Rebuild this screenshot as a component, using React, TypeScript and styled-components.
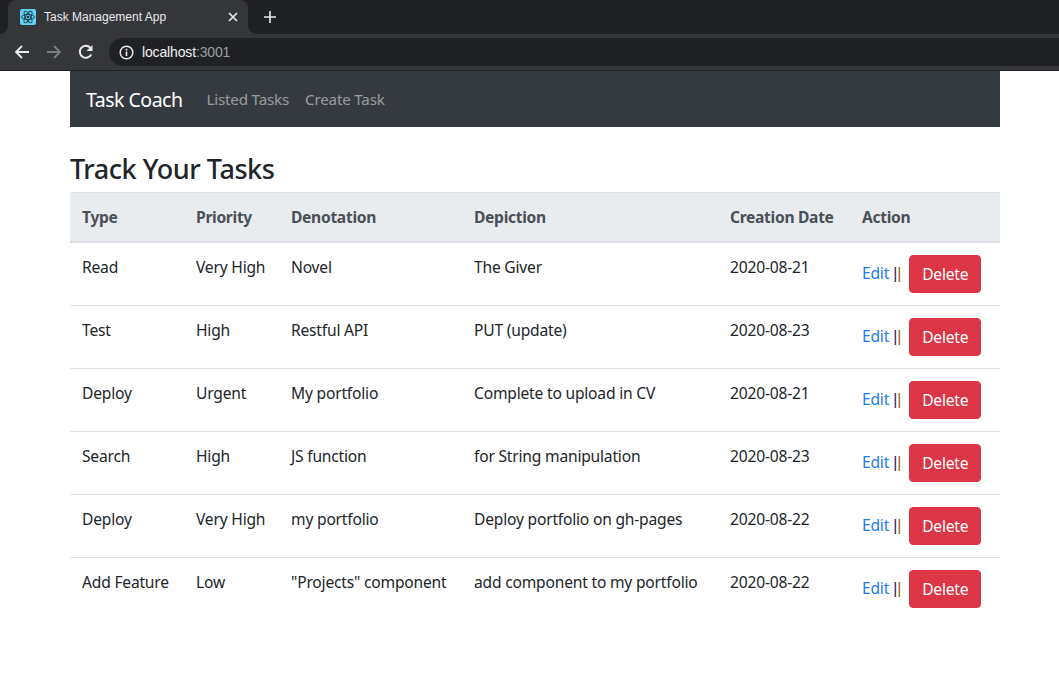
import React from "react";
import styled, { createGlobalStyle } from "styled-components";

const Global = createGlobalStyle`
  html, body { margin: 0; padding: 0; background: #fff; }
  body { font-family: "Noto Sans", "Open Sans", sans-serif; font-size: 15.6px; letter-spacing: -0.2px; line-height: 24px; color: #212529; }
  * { box-sizing: border-box; }
`;

const Strip = styled.div`
  height: 34px;
  background: #202124;
  display: flex;
  align-items: flex-end;
  padding-left: 8px;
`;
const Tab = styled.div`
  position: relative;
  width: 240px;
  height: 34px;
  background: #35363a;
  border-radius: 8px 8px 0 0;
  display: flex;
  align-items: center;
  padding: 0 9px 0 12px;
  gap: 8px;
  font-family: "Liberation Sans", sans-serif;
  font-size: 12px;
  letter-spacing: 0;
  color: #e8eaed;
  &::before, &::after {
    content: "";
    position: absolute;
    bottom: 0;
    width: 8px;
    height: 8px;
  }
  &::before {
    left: -8px;
    background: radial-gradient(circle at 0 0, transparent 7.5px, #35363a 8px);
  }
  &::after {
    right: -8px;
    background: radial-gradient(circle at 100% 0, transparent 7.5px, #35363a 8px);
  }
`;
const TabTitle = styled.span`
  flex: 1;
`;
const Favicon = styled.svg`
  width: 16px;
  height: 16px;
  display: block;
`;
const PlainIcon = styled.svg<{ $size: number }>`
  width: ${(p) => p.$size}px;
  height: ${(p) => p.$size}px;
  display: block;
  flex: none;
`;
const NewTab = styled.div`
  width: 14px;
  height: 14px;
  margin: 0 0 10px 15px;
`;
const Toolbar = styled.div`
  height: 37px;
  background: #35363a;
  border-bottom: 1px solid #202124;
  display: flex;
  align-items: center;
  padding: 0 0 0 14px;
  gap: 16px;
`;
const Omni = styled.div`
  flex: 1;
  height: 28px;
  margin-left: -1px;
  background: #202124;
  border-radius: 14px 0 0 14px;
  display: flex;
  align-items: center;
  padding-left: 10px;
  gap: 8px;
  font-family: "Liberation Sans", sans-serif;
  font-size: 14px;
  letter-spacing: -0.15px;
  color: #f1f3f4;
`;
const Port = styled.span`
  color: #9aa0a6;
`;
const Page = styled.div`
  width: 930px;
  margin-left: 70px;
`;
const Navbar = styled.nav`
  height: 56px;
  background: #343a40;
  display: flex;
  align-items: center;
  padding: 0 16px;
`;
const Brand = styled.span`
  font-size: 19.5px;
  letter-spacing: -0.5px;
  color: #fff;
  margin: 2px 24px 0 0;
`;
const NavLink = styled.a`
  font-size: 15.2px;
  letter-spacing: -0.2px;
  color: rgba(255, 255, 255, 0.5);
  margin-right: 16px;
`;
const Heading = styled.h2`
  margin: 21px 0 3px;
  font-size: 27px;
  letter-spacing: -0.45px;
  line-height: 41px;
  font-weight: 500;
  color: #212529;
`;
const Table = styled.table`
  width: 930px;
  table-layout: fixed;
  border-collapse: collapse;
`;
const Th = styled.th<{ $w: number }>`
  width: ${(p) => p.$w}px;
  text-align: left;
  padding: 11px 12px;
  height: 49px;
  background: #e9ecef;
  color: #495057;
  font-weight: 700;
  letter-spacing: -0.3px;
  border-top: 1px solid #dee2e6;
  border-bottom: 2px solid #dee2e6;
  white-space: nowrap;
`;
const Td = styled.td`
  padding: 12px;
  height: 63px;
  vertical-align: top;
  border-bottom: 1px solid #dee2e6;
  white-space: nowrap;
`;
const LastRow = styled.tr`
  td { border-bottom: none; }
`;
const EditLink = styled.a`
  color: #1f7bf0;
  vertical-align: 1px;
`;
const Sep = styled.span`
  font-family: "Liberation Sans", sans-serif;
  letter-spacing: 0;
  margin: 0 8px 0 4px;
  vertical-align: 1px;
`;
const SepBar = styled.span<{ $c: string }>`
  color: ${(p) => p.$c};
`;
const Delete = styled.button`
  font: inherit;
  letter-spacing: inherit;
  height: 38px;
  width: 72px;
  padding: 0;
  color: #fff;
  background: #dc3545;
  border: 1px solid #dc3545;
  border-radius: 4px;
`;

const cols: [string, number][] = [
  ["Type", 114], ["Priority", 95], ["Denotation", 183], ["Depiction", 256], ["Creation Date", 132], ["Action", 150],
];
const rows = [
  ["Read", "Very High", "Novel", "The Giver", "2020-08-21"],
  ["Test", "High", "Restful API", "PUT (update)", "2020-08-23"],
  ["Deploy", "Urgent", "My portfolio", "Complete to upload in CV", "2020-08-21"],
  ["Search", "High", "JS function", "for String manipulation", "2020-08-23"],
  ["Deploy", "Very High", "my portfolio", "Deploy portfolio on gh-pages", "2020-08-22"],
  ["Add Feature", "Low", "\"Projects\" component", "add component to my portfolio", "2020-08-22"],
];

const Actions = () => (
  <Td>
    <EditLink>Edit</EditLink>
    <Sep><SepBar $c="#1c1c5e">|</SepBar><SepBar $c="#9c5c00">|</SepBar></Sep>
    <Delete>Delete</Delete>
  </Td>
);

export default function App() {
  return (
    <>
      <Global />
      <Strip>
        <Tab>
          <Favicon viewBox="0 0 16 16">
            <rect width="16" height="16" rx="2" fill="#5fd3f3" />
            <g fill="none" stroke="#1f3a4a" strokeWidth="0.9">
              <ellipse cx="8" cy="8" rx="6.5" ry="2.6" />
              <ellipse cx="8" cy="8" rx="6.5" ry="2.6" transform="rotate(60 8 8)" />
              <ellipse cx="8" cy="8" rx="6.5" ry="2.6" transform="rotate(120 8 8)" />
            </g>
            <circle cx="8" cy="8" r="1.3" fill="#1f3a4a" />
          </Favicon>
          <TabTitle>Task Management App</TabTitle>
          <PlainIcon $size={12} viewBox="0 0 12 12">
            <path d="M2 2l8 8M10 2l-8 8" stroke="#e8eaed" strokeWidth="1.7" />
          </PlainIcon>
        </Tab>
        <NewTab>
          <PlainIcon $size={14} viewBox="0 0 14 14">
            <path d="M7 1v12M1 7h12" stroke="#e8eaed" strokeWidth="1.6" />
          </PlainIcon>
        </NewTab>
      </Strip>
      <Toolbar>
        <PlainIcon $size={16} viewBox="0 0 16 16">
          <path d="M15 8H2M8 2L2 8l6 6" fill="none" stroke="#e8eaed" strokeWidth="1.8" />
        </PlainIcon>
        <PlainIcon $size={16} viewBox="0 0 16 16">
          <path d="M1 8h13M8 2l6 6-6 6" fill="none" stroke="#7c7e81" strokeWidth="1.8" />
        </PlainIcon>
        <PlainIcon $size={16} viewBox="0 0 16 16">
          <path d="M13.2 10.5A6 6 0 1 1 12.2 3.6" fill="none" stroke="#e8eaed" strokeWidth="2" />
          <path d="M14.5 1v6h-6z" fill="#e8eaed" />
        </PlainIcon>
        <Omni>
          <PlainIcon $size={15} viewBox="0 0 15 15">
            <circle cx="7.5" cy="7.5" r="6.3" fill="none" stroke="#e8eaed" strokeWidth="1.5" />
            <path d="M7.5 6.5v4.5M7.5 3.8v1.6" stroke="#e8eaed" strokeWidth="1.6" />
          </PlainIcon>
          <span>localhost<Port>:3001</Port></span>
        </Omni>
      </Toolbar>
      <Page>
        <Navbar>
          <Brand>Task Coach</Brand>
          <NavLink>Listed Tasks</NavLink>
          <NavLink>Create Task</NavLink>
        </Navbar>
        <Heading>Track Your Tasks</Heading>
        <Table>
          <thead>
            <tr>{cols.map(([c, w]) => <Th key={c} $w={w}>{c}</Th>)}</tr>
          </thead>
          <tbody>
            {rows.map((r, i) => {
              const cells = (
                <>
                  {r.map((c, j) => <Td key={j}>{c}</Td>)}
                  <Actions />
                </>
              );
              return i === rows.length - 1 ? <LastRow key={i}>{cells}</LastRow> : <tr key={i}>{cells}</tr>;
            })}
          </tbody>
        </Table>
      </Page>
    </>
  );
}
